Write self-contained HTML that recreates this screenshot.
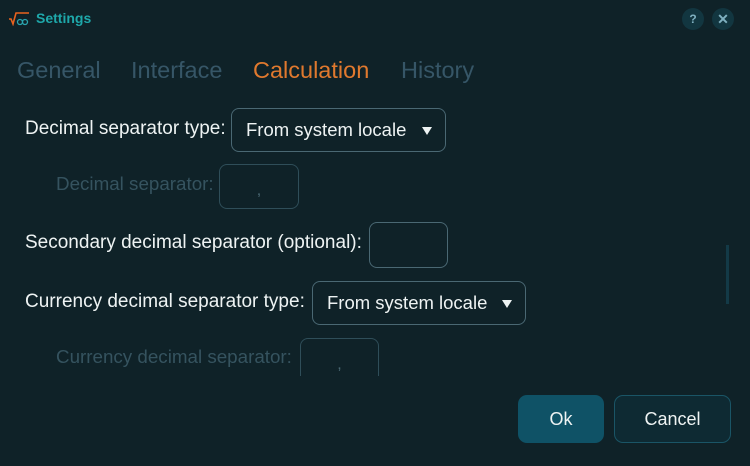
<!DOCTYPE html>
<html><head><meta charset="utf-8"><style>
*{margin:0;padding:0;box-sizing:border-box}
body{width:750px;height:463px;background:#0f2228;font-family:"Liberation Sans",sans-serif;position:relative;overflow:hidden;color:#eef3f3}
.a{position:absolute;white-space:nowrap}
.tab{font-size:23.5px;color:#365667;top:57px}
.lbl{font-size:19px;color:#eef3f3}
.dis{font-size:18.8px;color:#35535f}
.box{position:absolute;border:1px solid #4a6873;border-radius:8px}
.dd{font-size:18.5px;color:#eef3f3;padding-left:14px;line-height:41px}
.dd:after{content:"";position:absolute;right:13px;top:18px;border-left:5px solid transparent;border-right:5px solid transparent;border-top:8px solid #eef3f3}
.circ{position:absolute;width:22px;height:22px;border-radius:11px;background:#123640;color:#7fb0c0;font-size:12px;font-weight:bold;text-align:center;line-height:22px}
</style></head><body>
<svg class="a" style="left:8px;top:12px" width="22" height="14" viewBox="0 0 22 14"><path d="M1 7 L3 7 L5 12 L8 1 L21 1" stroke="#e8621e" stroke-width="1.6" fill="none"/><circle cx="12" cy="10" r="2.5" stroke="#2aa6b0" stroke-width="1.3" fill="none"/><circle cx="17" cy="10" r="2.5" stroke="#2aa6b0" stroke-width="1.3" fill="none"/></svg>
<div class="a" style="left:36px;top:10px;font-size:14px;font-weight:bold;color:#1ea8aa">Settings</div>
<div class="circ" style="left:682px;top:8px">?</div>
<div class="circ" style="left:712px;top:8px;font-size:14px">✕</div>
<div class="a tab" style="left:17px">General</div>
<div class="a tab" style="left:131px">Interface</div>
<div class="a tab" style="left:253px;color:#e0792e">Calculation</div>
<div class="a tab" style="left:401px">History</div>

<div class="a lbl" style="left:25px;top:118px">Decimal separator type:</div>
<div class="box dd" style="left:231px;top:108px;width:215px;height:44px">From system locale</div>
<div class="a dis" style="left:56px;top:173px">Decimal separator:</div>
<div class="box" style="left:219px;top:164px;width:80px;height:45px;border-color:#2f4e59;color:#4a6873;text-align:center;line-height:52px">,</div>

<div class="a lbl" style="left:25px;top:232px">Secondary decimal separator (optional):</div>
<div class="box" style="left:369px;top:222px;width:79px;height:46px"></div>

<div class="a lbl" style="left:25px;top:291px">Currency decimal separator type:</div>
<div class="box dd" style="left:312px;top:281px;width:214px;height:44px">From system locale</div>
<div class="a dis" style="left:56px;top:346px">Currency decimal separator:</div>
<div class="box" style="left:300px;top:338px;width:79px;height:50px;border-color:#2f4e59;color:#4a6873;text-align:center;line-height:52px">,</div>
<div class="a" style="left:0;top:376px;width:740px;height:90px;background:#0f2228"></div>

<div class="a" style="left:726px;top:245px;width:3px;height:59px;background:#133a47"></div>

<div class="a" style="left:518px;top:395px;width:86px;height:48px;border-radius:9px;background:#0f5266;font-size:18px;text-align:center;line-height:48px">Ok</div>
<div class="a" style="left:614px;top:395px;width:117px;height:48px;border-radius:9px;background:#0e2a33;border:1px solid #1a5566;font-size:18px;text-align:center;line-height:46px">Cancel</div>
</body></html>
